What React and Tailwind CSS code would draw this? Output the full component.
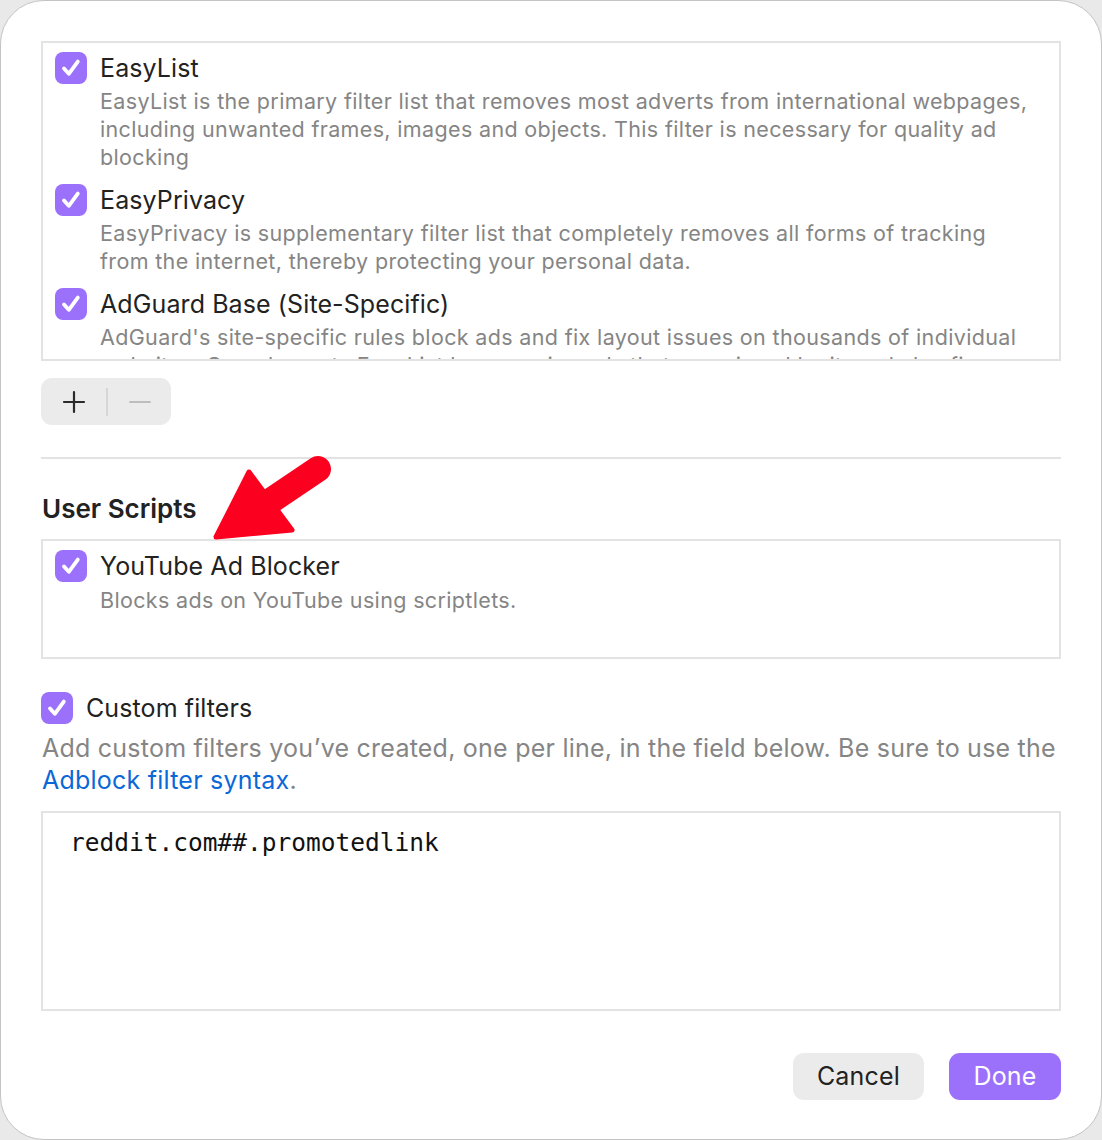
import React from "react";

const font = { fontFamily: "Inter, 'Noto Sans', sans-serif" };

function Check({ className = "" }) {
  return (
    <div className={"w-[32px] h-[32px] rounded-[8px] bg-[#9b70fa] flex items-center justify-center shrink-0 " + className}>
      <svg width="26" height="26" viewBox="0 0 26 26" fill="none">
        <path d="M6 13.5 L10.8 18.8 L19.8 6.6" stroke="white" strokeWidth="3.8" strokeLinecap="round" strokeLinejoin="round" />
      </svg>
    </div>
  );
}

function Item({ title, lines, className = "", descPt = "pt-[3px]" }) {
  return (
    <div className={"flex flex-col " + className}>
      <div className="flex items-center gap-[13px] h-[32px]">
        <Check />
        <span className="text-[25px] text-[#222] leading-none tracking-[0.1px]">{title}</span>
      </div>
      <div className={"pl-[45px] text-[21.5px] leading-[28px] text-[#858585] tracking-[0.35px] " + descPt}>
        {lines.map((l, i) => (
          <div key={i} className="whitespace-nowrap">{l}</div>
        ))}
      </div>
    </div>
  );
}

export default function App() {
  return (
    <div className="w-[1102px] h-[1140px] bg-[#e9e9e9] relative" style={font}>
      <div className="w-full h-full bg-white rounded-[44px] border border-[#c4c4c4] px-[40px] pt-[40px] flex flex-col">
        {/* filter list */}
        <div className="h-[320px] border-2 border-[#e3e3e3] overflow-hidden pl-[12px] pt-[9px]">
          <Item
            title="EasyList"
            lines={[
              "EasyList is the primary filter list that removes most adverts from international webpages,",
              "including unwanted frames, images and objects. This filter is necessary for quality ad",
              "blocking",
            ]}
          />
          <Item
            className="mt-[13px]"
            title="EasyPrivacy"
            lines={[
              "EasyPrivacy is supplementary filter list that completely removes all forms of tracking",
              "from the internet, thereby protecting your personal data.",
            ]}
          />
          <Item
            className="mt-[13px]"
            title="AdGuard Base (Site-Specific)"
            lines={[
              "AdGuard's site-specific rules block ads and fix layout issues on thousands of individual",
              "websites. Complements EasyList by removing ads that are missed by it, and also fixes",
            ]}
          />
        </div>

        {/* +/- */}
        <div className="mt-[17px] w-[130px] h-[47px] rounded-[11px] bg-[#ebebeb] flex items-center">
          <div className="w-[65px] flex items-center justify-center">
            <svg width="24" height="24" viewBox="0 0 24 24">
              <path d="M12 2 V22 M2 12 H22" stroke="#2a2a2a" strokeWidth="2.2" strokeLinecap="round" />
            </svg>
          </div>
          <div className="w-[2px] h-[28px] bg-[#d6d6d6]" />
          <div className="flex-1 flex items-center justify-center">
            <svg width="24" height="24" viewBox="0 0 24 24">
              <path d="M2 12 H22" stroke="#bdbdbd" strokeWidth="2" strokeLinecap="round" />
            </svg>
          </div>
        </div>

        <div className="mt-[32px] h-[2px] bg-[#e3e3e3]" />

        <div className="mt-[37px] text-[26px] font-semibold text-[#222] leading-none pl-[1px]">User Scripts</div>

        <div className="mt-[17px] h-[120px] border-2 border-[#e3e3e3] pl-[12px] pt-[9px]">
          <Item title="YouTube Ad Blocker" descPt="pt-[4px]" lines={["Blocks ads on YouTube using scriptlets."]} />
        </div>

        <div className="mt-[33px] flex items-center gap-[13px] h-[32px]">
          <Check />
          <span className="text-[25px] text-[#222] leading-none tracking-[0.1px]">Custom filters</span>
        </div>

        <div className="mt-[8px] text-[25px] leading-[32px] text-[#858585] tracking-[0.23px] pl-[1px]">
          <div className="whitespace-nowrap">Add custom filters you’ve created, one per line, in the field below. Be sure to use the</div>
          <div className="whitespace-nowrap">
            <span className="text-[#0b68d8]">Adblock filter syntax</span>.
          </div>
        </div>

        <div className="mt-[15px] h-[200px] border-2 border-[#e3e3e3] pl-[27px] pt-[14px]">
          <span
            className="text-[24.5px] text-[#111] leading-[32px]"
            style={{ fontFamily: "'DejaVu Sans Mono', 'Liberation Mono', monospace" }}
          >
            reddit.com##.promotedlink
          </span>
        </div>

        <div className="mt-[42px] flex justify-end gap-[25px]">
          <div className="w-[131px] h-[47px] rounded-[11px] bg-[#ebebeb] flex items-center justify-center text-[25px] text-[#222] tracking-[0.2px]">
            Cancel
          </div>
          <div className="w-[112px] h-[47px] rounded-[11px] bg-[#9b70fa] flex items-center justify-center text-[25px] text-white tracking-[0.2px]">
            Done
          </div>
        </div>
      </div>

      {/* red arrow overlay */}
      <svg className="absolute left-0 top-0 pointer-events-none" width="1102" height="1140">
        <line x1="272" y1="500" x2="318" y2="469" stroke="#fc0020" strokeWidth="26" strokeLinecap="round" />
        <polygon points="216,537 249,472 292,530" fill="#fc0020" stroke="#fc0020" strokeWidth="5" strokeLinejoin="round" />
      </svg>
    </div>
  );
}
